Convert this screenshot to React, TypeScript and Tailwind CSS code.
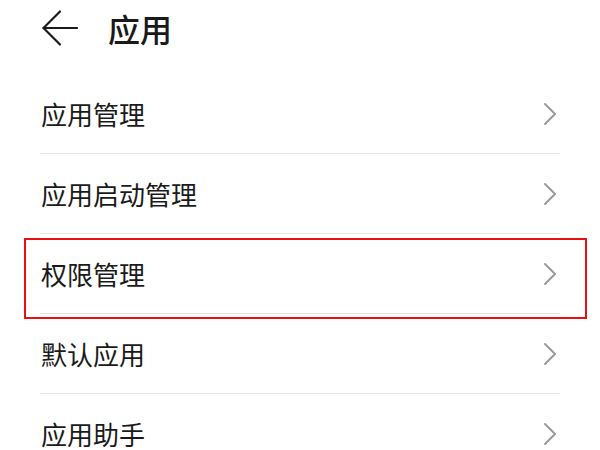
import React from "react";

const items = ["应用管理", "应用启动管理", "权限管理", "默认应用", "应用助手"];

function Chevron() {
  return (
    <svg width="14" height="24" viewBox="0 0 14 24" fill="none">
      <path d="M2 2 L12 12 L2 22" stroke="#9a9a9a" strokeWidth="2" strokeLinecap="round" strokeLinejoin="round" />
    </svg>
  );
}

export default function App() {
  return (
    <div
      className="relative w-[600px] h-[450px] overflow-hidden bg-white text-[#1a1a1a]"
      style={{ fontFamily: '"Noto Sans CJK SC", "Noto Sans", sans-serif' }}
    >
      <div className="flex items-center h-[56px] pl-[42px]">
        <svg width="36" height="36" viewBox="0 0 36 36" fill="none">
          <path d="M1.5 18 H35" stroke="#1a1a1a" strokeWidth="2.2" strokeLinecap="round" />
          <path d="M18 1.5 L1.5 18 L18 34.5" stroke="#1a1a1a" strokeWidth="2.2" strokeLinecap="round" strokeLinejoin="round" />
        </svg>
        <div className="ml-[30px] text-[32px] leading-none font-medium">应用</div>
      </div>
      <div className="pt-[18px] px-[40px]">
        {items.map((t, i) => (
          <div key={t} className={i > 0 ? "border-t border-[#e6e6e6]" : ""}>
            <div className="flex items-center justify-between h-[79px] pl-[1px] pr-[3px]">
              <span className="text-[26px] leading-none">{t}</span>
              <Chevron />
            </div>
          </div>
        ))}
      </div>
      <div className="absolute left-[24px] top-[238px] w-[563px] h-[81px] border-2 border-[#e81010]" />
    </div>
  );
}
